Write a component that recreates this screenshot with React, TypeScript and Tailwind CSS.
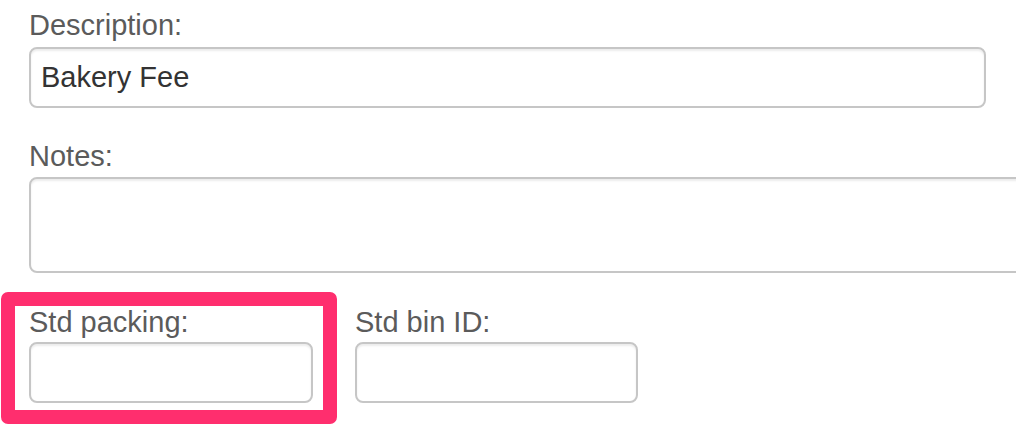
const inputCls =
  "block h-[61px] rounded-[8px] border-2 border-[#c6c6c6] bg-white px-[10px] text-[29px] text-[#333] shadow-[inset_0_2px_2px_rgba(0,0,0,0.075)] outline-none";

const labelCls = "block h-[36px] leading-[36px] text-[29px] text-[#5b5b5b] mb-[2px]";

export default function App() {
  return (
    <div
      className="w-screen h-screen overflow-hidden bg-white pl-[29px] pt-[7px]"
      style={{ fontFamily: '"Liberation Sans", Arial, sans-serif' }}
    >
      <div className="mb-[30px]">
        <label className={labelCls + " !mb-[4px]"}>Description:</label>
        <input
          className={inputCls + " w-[957px]"}
          defaultValue="Bakery Fee"
          readOnly
        />
      </div>

      <div className="mb-[31px]">
        <label className={labelCls + " !mb-[3px]"}>Notes:</label>
        <textarea
          className="block h-[96px] w-[1010px] resize-none rounded-[8px] border-2 border-[#c6c6c6] bg-white shadow-[inset_0_2px_2px_rgba(0,0,0,0.075)] outline-none"
          readOnly
        />
      </div>

      <div className="flex gap-[42px]">
        <div className="relative">
          <label className={labelCls}>Std packing:</label>
          <input className={inputCls + " w-[284px]"} readOnly />
          <div className="pointer-events-none absolute -left-[28px] -right-[24px] -top-[12px] -bottom-[21px] rounded-[7px] border-[14px] border-[#ff2e6e]" />
        </div>
        <div>
          <label className={labelCls}>Std bin ID:</label>
          <input className={inputCls + " w-[283px]"} readOnly />
        </div>
      </div>
    </div>
  );
}
